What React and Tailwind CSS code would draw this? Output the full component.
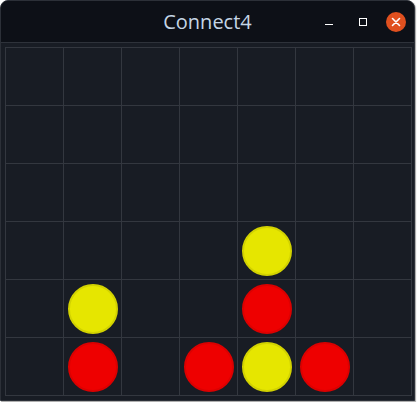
const board = [
  [0, 0, 0, 0, 0, 0, 0],
  [0, 0, 0, 0, 0, 0, 0],
  [0, 0, 0, 0, 0, 0, 0],
  [0, 0, 0, 0, 2, 0, 0],
  [0, 2, 0, 0, 1, 0, 0],
  [0, 1, 0, 1, 2, 1, 0],
];

function Piece({ v }) {
  if (v === 1) return <div className="w-[50px] h-[50px] rounded-full bg-[#ee0000] border-2 border-[#dc0000]" />;
  if (v === 2) return <div className="w-[50px] h-[50px] rounded-full bg-[#e6e600] border-2 border-[#d2d200]" />;
  return null;
}

export default function App() {
  return (
    <div className="w-[417px] h-[402px] bg-white">
      <div className="w-[415px] h-[401px] rounded-t-[8px] border border-[#2c3038] bg-[#181c24] overflow-hidden shadow-[1px_1px_1px_rgba(0,0,0,0.35)]">
        <div className="relative h-[42px] bg-[#0d1017] border-b border-[#2e323a] flex items-center justify-center">
          <span className="text-[20px] text-[#c5d6e6] font-['Open_Sans','Noto_Sans',sans-serif] leading-none pt-[1px]">Connect4</span>
          <div className="absolute right-[8px] top-0 h-full flex items-center">
            <div className="w-[34px] flex justify-center">
              <div className="w-[8px] h-[1px] bg-white mt-[6px]" />
            </div>
            <div className="w-[34px] flex justify-center">
              <div className="w-[8px] h-[8px] border border-white" />
            </div>
            <div className="w-[20px] h-[20px] rounded-full bg-[#e0501f] flex items-center justify-center ml-[6px]">
              <svg width="10" height="10" viewBox="0 0 10 10">
                <path d="M1.5 1.5L8.5 8.5M8.5 1.5L1.5 8.5" stroke="white" strokeWidth="1.6" strokeLinecap="round" />
              </svg>
            </div>
          </div>
        </div>
        <div className="pl-[4px] pt-[4px]">
          <div className="w-[407px] grid grid-cols-7 border-l border-t border-[#33373f]">
            {board.flat().map((v, i) => (
              <div key={i} className="h-[58px] border-r border-b border-[#33373f] flex items-center justify-center">
                <Piece v={v} />
              </div>
            ))}
          </div>
        </div>
      </div>
    </div>
  );
}
